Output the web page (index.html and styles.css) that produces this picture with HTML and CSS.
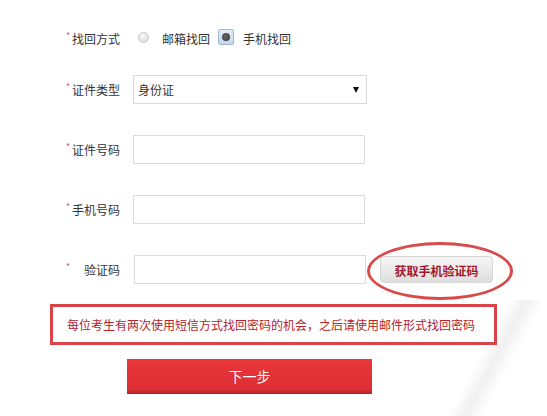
FILE: index.html
```html
<!DOCTYPE html>
<html lang="zh-CN">
  <head>
    <meta charset="UTF-8" />
    <meta name="viewport" content="width=device-width, initial-scale=1.0" />
    <title>找回密码</title>
    <link rel="stylesheet" href="styles.css">
  </head>
  <body>
    <div class="deco"></div>
    <form class="find-form">
      <div class="row row-first">
        <label class="label"><i>*</i><span>找回方式</span></label>
        <div class="radios">
          <span class="radio"></span>
          <span class="radio-text">邮箱找回</span>
          <span class="radio radio-on"></span>
          <span class="radio-text">手机找回</span>
        </div>
      </div>
      <div class="row">
        <label class="label"><i>*</i><span>证件类型</span></label>
        <div class="select">
          <span>身份证</span>
          <b class="arrow"></b>
        </div>
      </div>
      <div class="row">
        <label class="label"><i>*</i><span>证件号码</span></label>
        <input class="text-input" type="text" />
      </div>
      <div class="row">
        <label class="label"><i>*</i><span>手机号码</span></label>
        <input class="text-input" type="text" />
      </div>
      <div class="row row-code">
        <label class="label"><i>*</i><span>验证码</span></label>
        <input class="text-input code-input" type="text" />
        <span class="code-wrap">
          <a href="javascript:;" class="btn-code">获取手机验证码</a>
        </span>
      </div>
      <div class="notice">每位考生有两次使用短信方式找回密码的机会，之后请使用邮件形式找回密码</div>
      <div class="actions">
        <a href="javascript:;" class="btn-next">下一步</a>
      </div>
    </form>
  </body>
</html>
```

FILE: styles.css
```css
* {
  margin: 0;
  padding: 0;
  box-sizing: border-box;
  text-decoration: none;
}
html {
  overflow: hidden;
}
body {
  width: 547px;
  height: 416px;
  overflow: hidden;
  position: relative;
  background: #fff;
  font-family: "Noto Sans CJK SC", "Liberation Sans", sans-serif;
  font-size: 12px;
  color: #333;
}
/* faint background stripe at the bottom right */
.deco {
  position: absolute;
  left: 478px;
  top: 300px;
  width: 36px;
  height: 116px;
  background: linear-gradient(90deg, rgba(240, 240, 240, 0), #f0f0f0 50%, rgba(240, 240, 240, 0));
  transform: skewX(-28deg);
}
.find-form {
  position: relative;
  padding: 24px 0 0 50px;
}
.row {
  display: flex;
  align-items: center;
  height: 29px;
  margin-bottom: 31px;
  padding-left: 16px;
}
.row-first {
  margin-bottom: 22px;
}
.row-code {
  margin-bottom: 20px;
}
.label {
  display: flex;
  justify-content: space-between;
  width: 54px;
  margin-right: 13px;
  line-height: 29px;
  color: #333;
}
.label i {
  font-style: normal;
  color: #d0606a;
  font-size: 9px;
  line-height: 24px;
}
.radios {
  display: flex;
  align-items: center;
  padding-left: 5px;
  margin-top: -3px;
}
.radio {
  display: inline-block;
  width: 11px;
  height: 11px;
  border-radius: 50%;
  border: 1px solid #c8c8c8;
  background: radial-gradient(circle at 40% 35%, #fafafa, #d6d6d6);
  margin-right: 13px;
}
.radio-text {
  margin-top: 3px;
}
.radio-on {
  position: relative;
  width: 16px;
  height: 16px;
  border-radius: 2px;
  border: 1px solid #9fb8d6;
  background: linear-gradient(#e4eefa, #c4d6ec);
  margin: 0 9px 0 8px;
}
.radio-on::after {
  content: "";
  position: absolute;
  left: 3px;
  top: 3px;
  width: 8px;
  height: 8px;
  border-radius: 50%;
  background: radial-gradient(circle at 40% 40%, #666, #333);
}
.select {
  display: flex;
  align-items: center;
  justify-content: space-between;
  width: 234px;
  height: 29px;
  border: 1px solid #d9d9d9;
  padding: 0 7px 0 4px;
  color: #333;
}
.arrow {
  width: 0;
  height: 0;
  border-left: 3px solid transparent;
  border-right: 3px solid transparent;
  border-top: 6px solid #111;
}
.text-input {
  width: 232px;
  height: 29px;
  border: 1px solid #dcdcdc;
  outline: none;
  font-family: inherit;
  font-size: 12px;
}
.code-input {
  margin-left: 1px;
}
.code-wrap {
  position: relative;
  margin-left: 14px;
}
.code-wrap::before {
  content: "";
  position: absolute;
  left: -13px;
  right: -20px;
  top: -14px;
  bottom: -17px;
  border: 3px solid #d94a4a;
  border-radius: 50%;
}
.btn-code {
  display: block;
  width: 113px;
  height: 27px;
  line-height: 27px;
  text-align: center;
  border: 1px solid #d6d6d6;
  border-radius: 4px;
  background: linear-gradient(#f6f6f6, #dedede);
  color: #a3172c;
  font-weight: bold;
  font-size: 12px;
}
.notice {
  width: 447px;
  height: 41px;
  line-height: 35px;
  border: 3px solid #d94448;
  padding-left: 14px;
  color: #b3242c;
}
.actions {
  padding: 14px 0 0 77px;
}
.btn-next {
  display: block;
  width: 245px;
  height: 35px;
  line-height: 35px;
  text-align: center;
  background: linear-gradient(#e9373c, #dc2e33 85%, #b3252a);
  color: #fff;
  font-size: 14px;
}
```
